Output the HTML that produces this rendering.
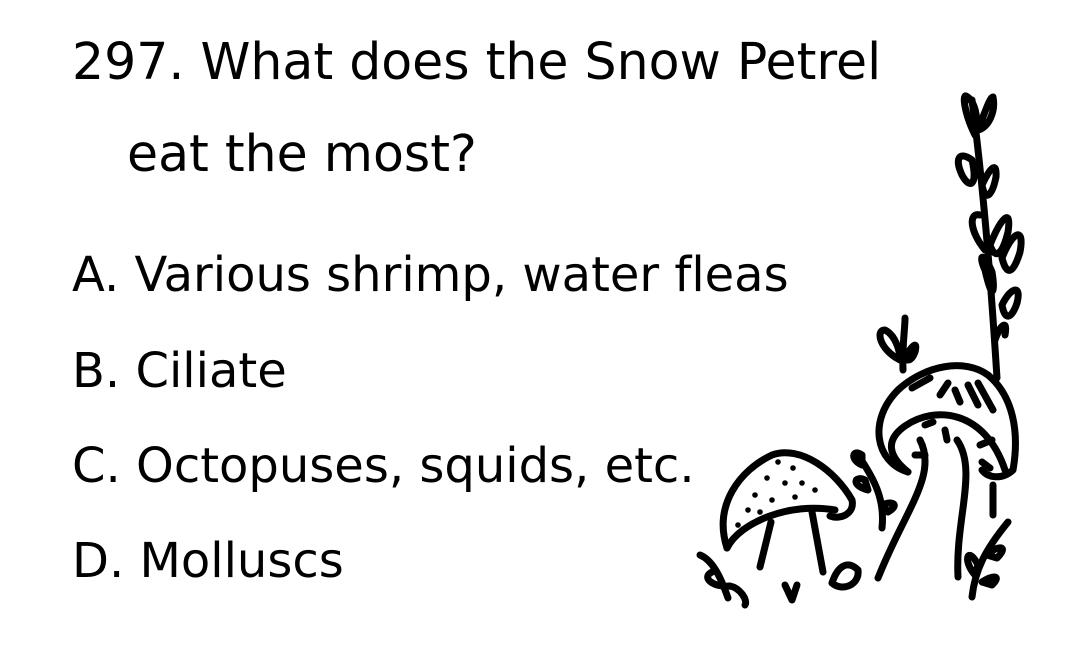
<!DOCTYPE html>
<html><head><meta charset="utf-8"><style>
html,body{margin:0;padding:0;background:#fff;width:1080px;height:663px;overflow:hidden;position:relative}
.t{position:absolute;font-family:"DejaVu Sans","Liberation Sans",sans-serif;font-size:48px;color:#000;white-space:nowrap;line-height:1;font-variant-ligatures:none;font-feature-settings:"liga" 0}
.q{font-size:50.5px}
svg{position:absolute;left:0;top:0}
</style></head><body>
<div class="t q" style="left:72px;top:37px">297. What does the Snow Petrel</div>
<div class="t q" style="left:127px;top:129px">eat the most?</div>
<div class="t" style="left:72px;top:251px">A. Various shrimp, water fleas</div>
<div class="t" style="left:72px;top:347px">B. Ciliate</div>
<div class="t" style="left:72px;top:442px">C. Octopuses, squids, etc.</div>
<div class="t" style="left:72px;top:537px">D. Molluscs</div>
<svg width="1080" height="663" fill="none" stroke="#000" stroke-width="7" stroke-linecap="round" stroke-linejoin="round">
<!-- vine -->
<path d="M997 378 C992 300 985 200 972 100"/>
<path d="M975 135 C965 115 962 95 966 96 C974 100 980 118 975 135Z"/>
<path d="M978 130 C985 112 990 97 993 97 C996 112 988 128 978 130Z"/>
<path d="M972 160 C958 150 955 160 962 175 C970 190 978 185 972 160Z"/>
<path d="M982 185 C990 168 997 160 996 177 C993 192 986 205 982 185Z"/>
<path d="M980 215 C968 212 970 232 985 250"/>
<path d="M990 245 C1000 220 1012 205 1008 232 C1003 252 996 262 990 245Z"/>
<path d="M1002 258 C1012 232 1025 225 1020 252 C1014 272 1007 278 1002 258Z"/>
<path d="M985 270 C978 255 983 250 992 272 C995 290 993 305 985 270Z"/>
<path d="M1002 305 C1010 288 1022 283 1017 303 C1012 318 1005 322 1002 305Z"/>
<path d="M995 340 C1000 325 1008 318 1005 335"/>
<!-- big mushroom -->
<path d="M908 472 C875 462 868 420 898 390 C925 365 965 358 988 375 C1012 395 1020 430 1013 470 C1002 480 988 478 982 470"/>
<path d="M908 472 C888 456 885 440 905 426 C935 405 985 410 1005 470"/>
<path d="M920 440 C938 475 905 510 878 578"/>
<path d="M957 440 C978 470 955 520 958 577"/>
<path d="M993 485 L993 515"/>
<path d="M912 388 L930 378 M940 395 L948 383 M955 390 L960 402 M968 385 L978 405 M978 383 L993 410 M925 425 L933 422 M945 430 L947 440 M915 455 L925 455 M980 445 L992 440 M982 462 L990 468"/>
<!-- small mushroom -->
<path d="M727 548 C713 505 740 470 772 455 C800 445 835 470 852 500 C855 514 840 520 830 516"/>
<path d="M727 548 C740 522 790 502 835 510"/>
<path d="M771 522 L760 567 M812 512 L823 572"/>
<g fill="#000" stroke="none">
<circle cx="778" cy="462" r="2.8"/><circle cx="793" cy="468" r="2.8"/><circle cx="767" cy="478" r="2.8"/><circle cx="785" cy="483" r="2.8"/><circle cx="802" cy="483" r="2.8"/><circle cx="815" cy="490" r="2.8"/><circle cx="755" cy="495" r="2.8"/><circle cx="772" cy="500" r="2.8"/><circle cx="795" cy="497" r="2.8"/><circle cx="748" cy="510" r="2.8"/><circle cx="760" cy="512" r="2.8"/><circle cx="738" cy="525" r="2.8"/>
</g>
<!-- small plants -->
<path d="M903 370 C902 345 905 330 905 318"/>
<path d="M900 360 C880 350 875 330 885 330 C895 335 900 350 900 360Z"/>
<path d="M905 358 C912 345 918 340 915 352 C912 360 908 362 905 358Z"/>
<path d="M882 528 C885 500 875 480 858 455"/>
<path d="M862 465 C850 460 852 448 862 455 Z M865 480 C855 475 850 485 868 490Z M882 505 C893 500 900 505 888 512Z"/>
<path d="M972 597 C975 570 985 550 1008 522"/>
<path d="M975 575 C962 560 968 545 978 565Z M987 555 C997 545 1010 545 997 558Z M982 582 C993 575 1002 575 992 585Z"/>
<path d="M700 555 C712 560 720 575 728 598 M712 572 C700 578 715 588 730 586 C740 588 748 600 745 605"/>
<path d="M785 585 L792 600 L797 585"/>
<path d="M832 583 C838 565 848 560 858 570 C860 585 842 592 832 583Z"/>
</svg>
</body></html>
